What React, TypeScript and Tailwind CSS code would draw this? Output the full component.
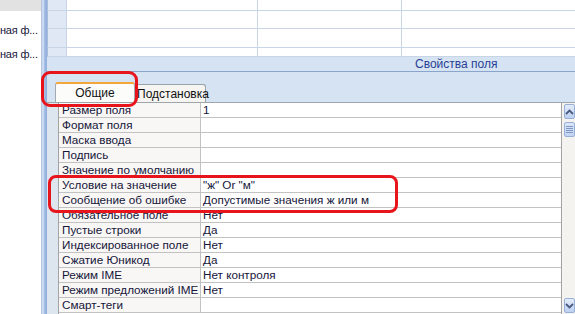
import React from "react";

const rows: [string, string][] = [
  ["Размер поля", "1"],
  ["Формат поля", ""],
  ["Маска ввода", ""],
  ["Подпись", ""],
  ["Значение по умолчанию", ""],
  ["Условие на значение", "\"ж\" Or \"м\""],
  ["Сообщение об ошибке", "Допустимые значения ж или м"],
  ["Обязательное поле", "Нет"],
  ["Пустые строки", "Да"],
  ["Индексированное поле", "Нет"],
  ["Сжатие Юникод", "Да"],
  ["Режим IME", "Нет контроля"],
  ["Режим предложений IME", "Нет"],
  ["Смарт-теги", ""],
];

function GridCell({ w, h, sel, last }: { w?: string; h: string; sel?: boolean; last?: boolean }) {
  return (
    <div
      className={`${h} ${w ?? "flex-1"} ${sel ? "bg-[#dfe8f4] border-l border-l-[#a9bddb]" : "bg-white"} ${last ? "" : "border-r"} border-b border-[#c8d5e7]`}
    />
  );
}

export default function App() {
  const topRows = ["h-[11px]", "h-[18px]", "h-[19px]", "h-[9px]"];
  return (
    <div
      className="relative w-[575px] h-[314px] overflow-hidden flex bg-white text-[11.7px] text-[#15153a]"
      style={{ fontFamily: "'Liberation Sans', Arial, sans-serif" }}
    >
      {/* left navigation pane */}
      <div className="w-[41px] shrink-0 flex flex-col bg-white">
        <div className="h-[11px] bg-[#e2e2e2]" />
        <div className="mt-[11px] h-[16px] leading-[16px] whitespace-nowrap text-[11px] tracking-[-0.2px]">ная ф...</div>
        <div className="mt-[8px] h-[16px] leading-[16px] whitespace-nowrap text-[11px] tracking-[-0.2px]">ная ф...</div>
      </div>
      {/* splitter */}
      <div className="w-[6px] shrink-0 flex">
        <div className="w-[1px] bg-[#b7c6dc]" />
        <div className="w-[2px] bg-[#c9daf1]" />
        <div className="w-[3px] bg-gradient-to-r from-[#a9c3e8] to-[#8eabd9]" />
      </div>
      {/* main area */}
      <div className="flex-1 flex flex-col min-w-0">
        {/* top grid */}
        <div className="h-[57px] shrink-0 flex flex-col">
          {topRows.map((h, i) => (
            <div key={i} className="flex">
              <GridCell w="w-[20px]" h={h} sel />
              <GridCell w="w-[191px]" h={h} />
              <GridCell w="w-[144px]" h={h} />
              <GridCell h={h} last />
            </div>
          ))}
        </div>
        {/* properties pane */}
        <div className="flex-1 flex flex-col bg-[#d5e3f2]">
          <div className="h-[15px] border-b border-[#8ba4cb] text-[12px] leading-[14px] text-[#2a3f96] pl-[368px] whitespace-nowrap">
            Свойства поля
          </div>
          <div className="h-[30px] flex items-end pl-[8px]">
            <div className="w-[80px] h-[20px] bg-[#fcfcfb] border-t-2 border-t-[#f3a73a] border-x border-x-[#a3a9b0] rounded-t-[3px] flex items-center justify-center text-[12px] text-[#111]">
              Общие
            </div>
            <div className="w-[71px] h-[18px] bg-[#f6f5f1] border-t border-r border-[#9aa3ab] rounded-tr-[3px] flex items-center pl-[2px] text-[12px] text-[#111] whitespace-nowrap">
              Подстановка
            </div>
          </div>
          {/* tab page */}
          <div className="flex-1 flex bg-[#dde5ef] border-t border-[#a0a6ad]">
            <div className="w-[11px] shrink-0" />
            <div className="w-[504px] shrink-0 border-l border-r border-[#a3a3a3] bg-white flex flex-col">
              {rows.map(([k, v], i) => (
                <div key={i} className="h-[15px] shrink-0 flex border-b border-[#c2c2c2]">
                  <div className="w-[142px] shrink-0 bg-[#f8f7f5] border-r border-[#c2c2c2] pl-[3px] leading-[14px] whitespace-nowrap overflow-hidden">
                    {k}
                  </div>
                  <div className="flex-1 pl-[2px] leading-[14px] whitespace-nowrap">{v}</div>
                </div>
              ))}
            </div>
            {/* scrollbar */}
            <div className="flex-1 bg-[#f4f3ef] flex flex-col pl-[2px] pt-[1px]">
              <div className="h-[15px] rounded-[2px] border border-[#98b0d6] bg-gradient-to-b from-[#e3ecfa] to-[#bdd0f1] flex items-center justify-center">
                <svg width="9" height="6" viewBox="0 0 9 6">
                  <path d="M1 5 L4.5 1.5 L8 5" stroke="#4a5a80" strokeWidth="1.8" fill="none" />
                </svg>
              </div>
              <div className="mt-[3px] h-[15px] rounded-[2px] border border-[#98b0d6] bg-gradient-to-b from-[#dbe6f9] to-[#c2d4f3] flex flex-col items-center justify-center gap-[1px]">
                <div className="w-[7px] h-[1px] bg-[#7f97c4]" />
                <div className="w-[7px] h-[1px] bg-[#7f97c4]" />
                <div className="w-[7px] h-[1px] bg-[#7f97c4]" />
                <div className="w-[7px] h-[1px] bg-[#7f97c4]" />
              </div>
              <div className="flex-1" />
              <div className="h-[15px] mb-[1px] rounded-[2px] border border-[#98b0d6] bg-gradient-to-b from-[#e3ecfa] to-[#bdd0f1] flex items-center justify-center">
                <svg width="9" height="6" viewBox="0 0 9 6">
                  <path d="M1 1 L4.5 4.5 L8 1" stroke="#4a5a80" strokeWidth="1.8" fill="none" />
                </svg>
              </div>
            </div>
          </div>
        </div>
      </div>
      {/* red annotation boxes */}
      <div className="absolute left-[41px] top-[71px] w-[97px] h-[36px] border-[3px] border-[#e8141c] rounded-[9px]" />
      <div className="absolute left-[48px] top-[175px] w-[350px] h-[38px] border-[3px] border-[#e8141c] rounded-[8px]" />
    </div>
  );
}
